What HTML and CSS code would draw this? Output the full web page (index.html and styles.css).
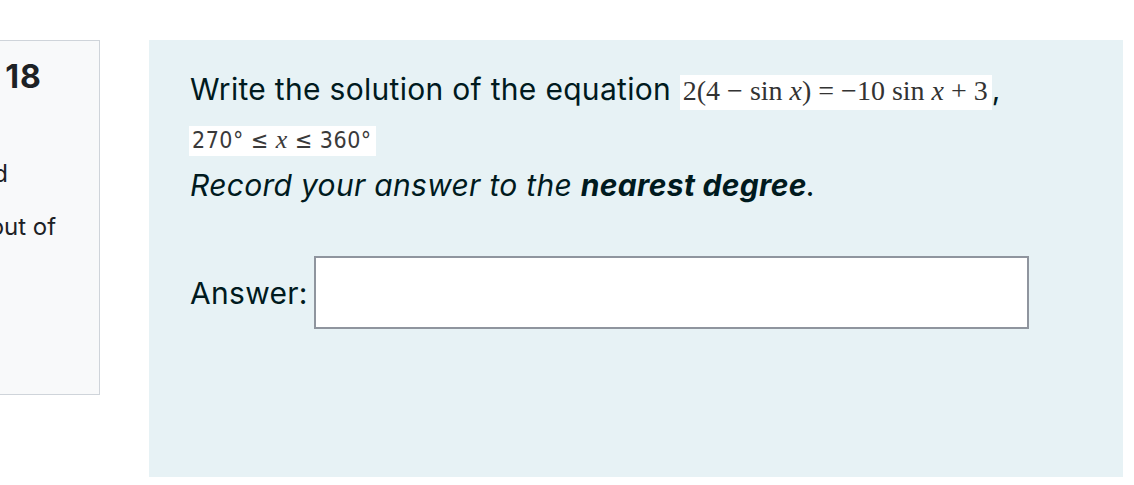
FILE: index.html
```html
<!DOCTYPE html>
<html lang="en">
<head>
<meta charset="utf-8">
<title>Question 18</title>
<link rel="stylesheet" href="styles.css">
</head>
<body>
<div class="que">
  <div class="info">
    <h3 class="no">Question <span class="qno">18</span></h3>
    <div class="state">Not yet answered</div>
    <div class="grade">Marked out of 1.00</div>
  </div>
  <div class="formulation">
    <div class="qtext">
      <p class="lead">Write the solution of the equation <span class="math eq">2(4 − sin <i>x</i>) = −10 sin <i>x</i> + 3</span>, <span class="math range">270° ≤ <i>x</i> ≤ 360°</span></p>
      <p class="note"><em>Record your answer to the <strong>nearest degree</strong>.</em></p>
    </div>
    <div class="ablock">
      <label class="alabel" for="answer">Answer:</label>
      <input class="ainput" id="answer" type="text">
    </div>
  </div>
</div>
</body>
</html>
```
FILE: styles.css
```css
html, body {
  margin: 0;
  padding: 0;
  background: #ffffff;
  overflow: hidden;
}
body {
  font-family: Inter, "Liberation Sans", Arial, sans-serif;
  padding-top: 40px;
}
.que {
  display: flex;
  align-items: flex-start;
}
.info {
  flex: none;
  box-sizing: border-box;
  width: 203px;
  height: 355px;
  margin-left: -103px;
  padding: 19px 10px 0 0;
  background: #f8f9fa;
  border: 1px solid #cfd4da;
  border-left: none;
  color: #1d2125;
}
.no {
  margin: 0;
  font-size: 24px;
  font-weight: 400;
  line-height: 34px;
  white-space: nowrap;
}
.qno {
  font-size: 32px;
  font-weight: 700;
  letter-spacing: 1px;
}
.state, .grade {
  font-size: 24px;
  line-height: 36px;
}
.state { margin-top: 23px; }
.grade { margin-top: 17px; }

.formulation {
  flex: none;
  box-sizing: border-box;
  width: 974px;
  height: 437px;
  margin-left: 49px;
  padding: 25px 41px 0 41px;
  background: #e7f2f5;
  color: #001a1e;
  font-size: 30px;
  letter-spacing: 0.3px;
}
.qtext p {
  margin: 0;
  line-height: 48px;
}
.math {
  display: inline-block;
  background: #ffffff;
  color: #333333;
  letter-spacing: 0;
  white-space: nowrap;
}
.math i { font-style: italic; }
.eq {
  font-family: "Liberation Serif", "Times New Roman", serif;
  font-size: 28px;
  line-height: 27px;
  padding: 2px 4px 6px 3px;
}
.range {
  font-family: "DejaVu Sans", sans-serif;
  font-stretch: condensed;
  font-size: 23px;
  line-height: 22px;
  letter-spacing: 0.5px;
  padding: 3px 4px 5px 3px;
  margin-left: -1px;
  color: #3a3a3a;
}
.range i { font-family: "Liberation Serif", serif; font-size: 26px; }
.note strong { font-weight: 700; }
.ablock {
  display: flex;
  align-items: center;
  margin-top: 47px;
}
.alabel {
  flex: none;
  width: 124px;
}
.ainput {
  box-sizing: border-box;
  width: 715px;
  height: 73px;
  margin: 0;
  border: 2px solid #8f959e;
  border-radius: 0;
  background: #ffffff;
  outline: none;
}
```
